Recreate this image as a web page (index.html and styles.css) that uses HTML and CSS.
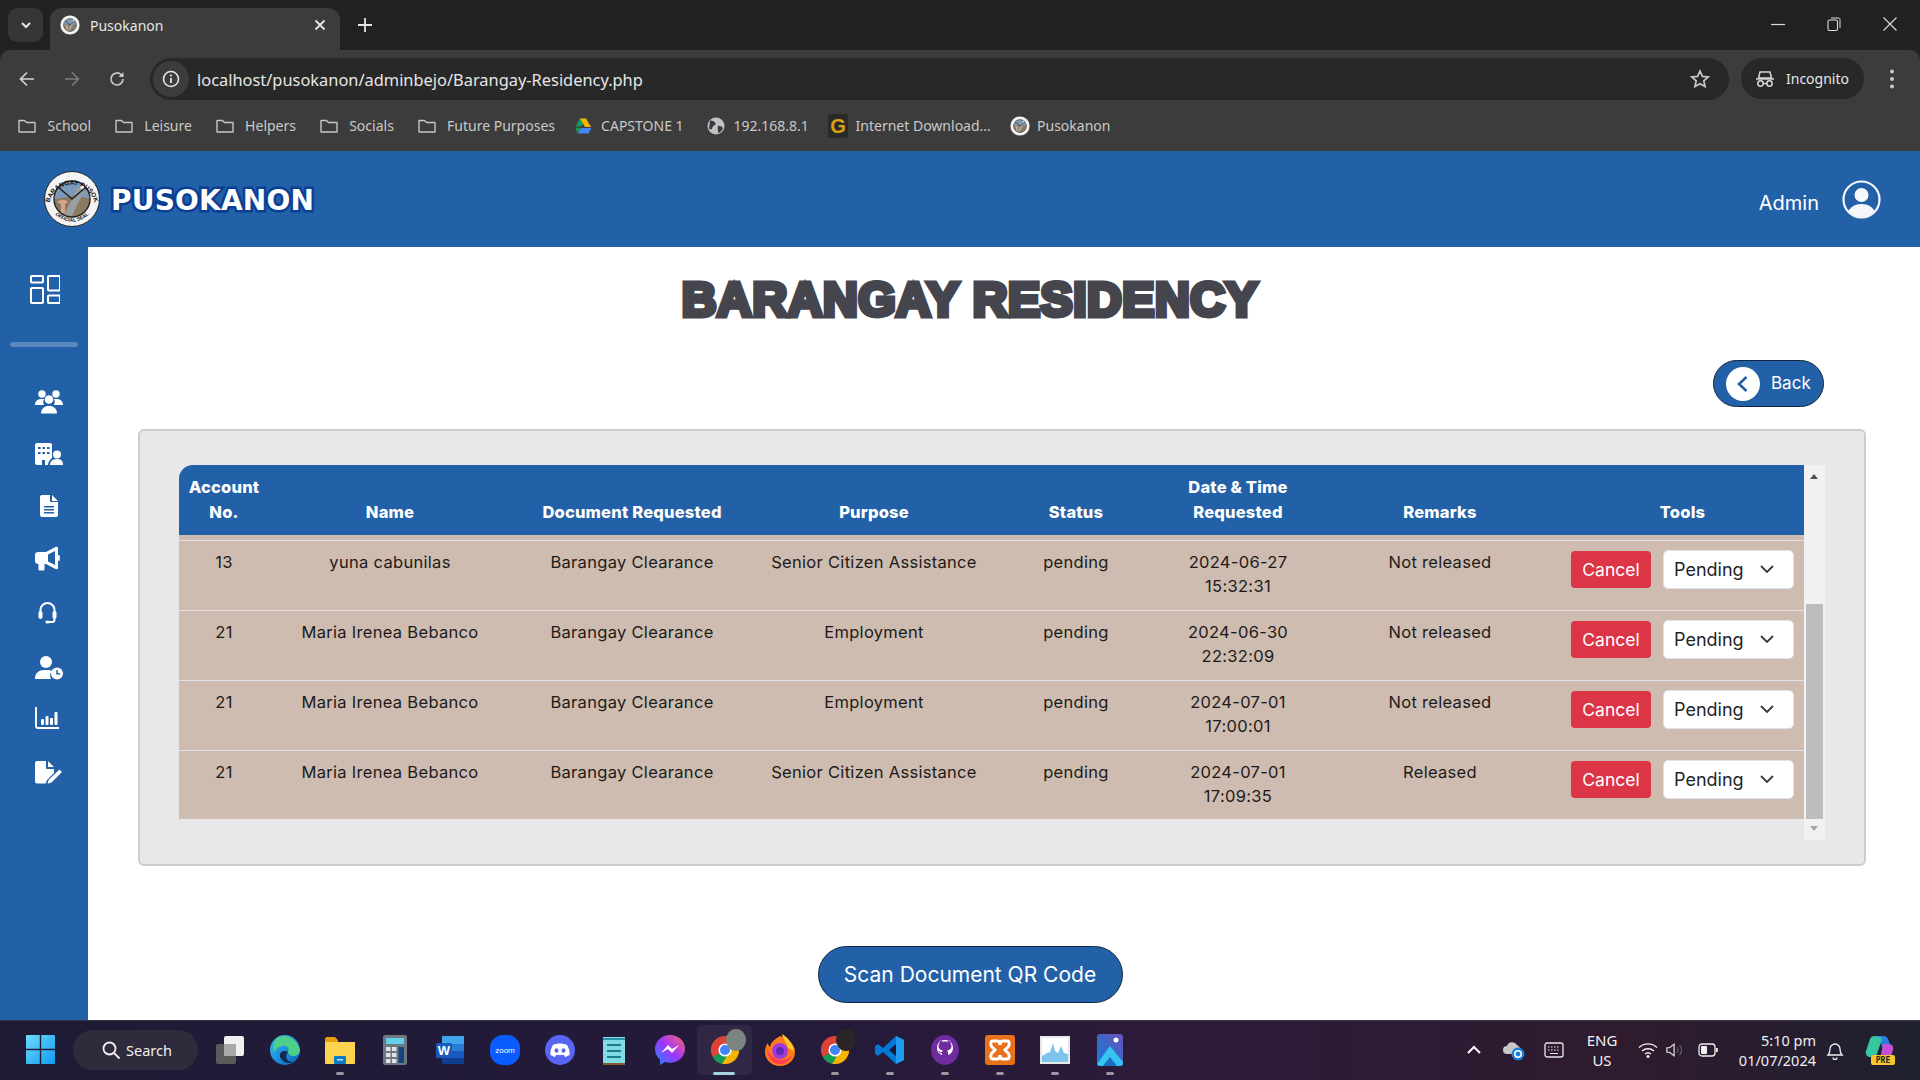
FILE: index.html
```html
<!DOCTYPE html>
<html lang="en">

<head>
    <meta charset="UTF-8">
    <title>Pusokanon</title>
    <link rel="stylesheet" href="styles.css">
</head>

<body>
    <!-- shared shapes -->
    <svg class="defs" width="0" height="0">
        <symbol id="seal" viewBox="0 0 56 56">
            <circle cx="28" cy="28" r="27.5" fill="#f4f4f4" stroke="#222" />
            <circle cx="28" cy="28" r="18" fill="#7d9bb8" />
            <path d="M10 28a18 18 0 0 0 36 0l-14-4-8 2z" fill="#8a7a62" />
            <path d="M20 44l14-28 6 4-12 25z" fill="#9aa0a0" />
            <path d="M13 31c4-3 8-3 11 0l-3 2v9h-4v-9z" fill="#d9a58a" />
            <path d="M14 16l14 12 14-12" fill="none" stroke="#222" stroke-width="1.6" />
            <circle cx="28" cy="28" r="18" fill="none" stroke="#222" stroke-width="1.4" />
            <circle cx="38" cy="16" r="2" fill="#f4f4f4" />
        </symbol>
        <symbol id="folder" viewBox="0 0 20 20">
            <path d="M2 4.500h5.500l2 2H18v9.500H2z" fill="none" stroke="#c7c7c7" stroke-width="1.4" stroke-linejoin="round" />
        </symbol>
        <symbol id="chrome" viewBox="0 0 32 32">
            <circle cx="16" cy="16" r="15" fill="#db4437" />
            <path d="M16 16L3 23.500A15 15 0 0 0 16 31l7-15z" fill="#0f9d58" />
            <path d="M16 16h15A15 15 0 0 1 16 31l-3 0 8-14z" fill="#f4b400" />
            <circle cx="16" cy="16" r="7" fill="#fff" />
            <circle cx="16" cy="16" r="5.400" fill="#4285f4" />
        </symbol>
    </svg>

    <!-- browser window bars -->
    <header class="browser">
        <div class="tab-strip">
            <div class="tab-search">
                <svg width="14" height="14" viewBox="0 0 14 14"><path d="M3 5l4 4 4-4" fill="none" stroke="#e6e6e6" stroke-width="2" /></svg>
            </div>
            <div class="tab">
                <svg class="tab-icon" width="20" height="20"><use href="#seal" /></svg>
                <span class="tab-title">Pusokanon</span>
                <svg width="12" height="12" viewBox="0 0 12 12"><path d="M1.500 1.500l9 9m0-9l-9 9" stroke="#e6e6e6" stroke-width="1.800" /></svg>
            </div>
            <svg class="tab-new" width="14" height="14" viewBox="0 0 14 14"><path d="M7 0v14M0 7h14" stroke="#e6e6e6" stroke-width="1.800" /></svg>
            <div class="window-controls">
                <svg width="14" height="14" viewBox="0 0 14 14"><path d="M0 7.500h14" stroke="#dcdcdc" stroke-width="1.200" /></svg>
                <svg width="14" height="14" viewBox="0 0 14 14"><rect x="1" y="3" width="9.500" height="10.500" rx="1.500" fill="none" stroke="#dcdcdc" stroke-width="1.100" /><path d="M4 1h7.500a1.500 1.500 0 0 1 1.500 1.500V11" fill="none" stroke="#dcdcdc" /></svg>
                <svg width="14" height="14" viewBox="0 0 14 14"><path d="M.5.5l13 13m0-13l-13 13" stroke="#dcdcdc" stroke-width="1.100" /></svg>
            </div>
        </div>

        <div class="toolbar">
            <svg class="nav-icon" width="18" height="18" viewBox="0 0 18 18"><path d="M16 9H3m6-6.500L2.500 9 9 15.500" fill="none" stroke="#d2d2d2" stroke-width="1.700" /></svg>
            <svg class="nav-icon" width="18" height="18" viewBox="0 0 18 18"><path d="M2 9h13M9 2.500L15.500 9 9 15.500" fill="none" stroke="#7d7d7d" stroke-width="1.700" /></svg>
            <svg class="nav-icon" width="18" height="18" viewBox="0 0 18 18"><path d="M15 9a6 6 0 1 1-1.800-4.300L15 6.500" fill="none" stroke="#c9c9c9" stroke-width="1.700" /><path d="M15.500 2v5h-5z" fill="#c9c9c9" /></svg>
            <div class="address">
                <div class="site-info">
                    <svg width="18" height="18" viewBox="0 0 18 18"><circle cx="9" cy="9" r="7.500" fill="none" stroke="#e6e6e6" stroke-width="1.600" /><path d="M9 8v5" stroke="#e6e6e6" stroke-width="1.800" /><circle cx="9" cy="5.500" r="1.100" fill="#e6e6e6" /></svg>
                </div>
                <span class="url">localhost/pusokanon/adminbejo/Barangay-Residency.php</span>
                <svg class="star" width="20" height="20" viewBox="0 0 20 20"><path d="M10 2l2.400 5.400 5.800.6-4.400 3.900 1.300 5.700L10 14.700l-5.100 2.900 1.300-5.700L1.800 8l5.800-.6z" fill="none" stroke="#c7c7c7" stroke-width="1.700" /></svg>
            </div>
            <div class="incognito">
                <svg width="20" height="20" viewBox="0 0 20 20"><path d="M5 3h10l1.500 6h-13zM1 10h18" fill="none" stroke="#d6d6d6" stroke-width="1.500" /><circle cx="5.500" cy="14.500" r="2.700" fill="none" stroke="#d6d6d6" stroke-width="1.500" /><circle cx="14.500" cy="14.500" r="2.700" fill="none" stroke="#d6d6d6" stroke-width="1.500" /><path d="M8 14.500h4" stroke="#d6d6d6" stroke-width="1.500" /></svg>
                <span>Incognito</span>
            </div>
            <svg class="menu-dots" width="6" height="22" viewBox="0 0 6 22"><circle cx="3" cy="3.500" r="2" fill="#c9c9c9" /><circle cx="3" cy="11" r="2" fill="#c9c9c9" /><circle cx="3" cy="18.500" r="2" fill="#c9c9c9" /></svg>
        </div>

        <nav class="bookmarks">
            <a class="bookmark"><svg width="20" height="20"><use href="#folder" /></svg>School</a>
            <a class="bookmark"><svg width="20" height="20"><use href="#folder" /></svg>Leisure</a>
            <a class="bookmark"><svg width="20" height="20"><use href="#folder" /></svg>Helpers</a>
            <a class="bookmark"><svg width="20" height="20"><use href="#folder" /></svg>Socials</a>
            <a class="bookmark"><svg width="20" height="20"><use href="#folder" /></svg>Future Purposes</a>
            <a class="bookmark bm-drive">
                <svg width="18" height="18" viewBox="0 0 18 18"><path d="M6 1.500h6L7.500 9.500h-6z" fill="#0f9d58" /><path d="M12 1.500l5 8.500h-6L6 1.500z" fill="#f4b400" /><path d="M4 16.500l3-5.500h10.500l-3 5.500z" fill="#4285f4" /><path d="M1 10.500l3 6 3-5.500z" fill="#0f9d58" /></svg>
                CAPSTONE 1
            </a>
            <a class="bookmark bm-site">
                <svg width="18" height="18" viewBox="0 0 18 18"><circle cx="9" cy="9" r="8.500" fill="#bfc3c7" /><path d="M3 3.500c3 0 5 1 5.500 3s-3 2-3 4-2 2-3.500 1.500M11 9c2-1 4 .5 5 2-1 3-3 4.500-5 5 .5-2-1-5 0-7z" fill="#3c3c3c" /></svg>
                192.168.8.1
            </a>
            <a class="bookmark bm-idm">
                <svg width="20" height="24" viewBox="0 0 20 24"><rect width="20" height="24" rx="2" fill="#2a2a2a" /><text x="10" y="19" class="idm-letter">G</text></svg>
                Internet Download...
            </a>
            <a class="bookmark bm-home"><svg width="20" height="20"><use href="#seal" /></svg>Pusokanon</a>
        </nav>
    </header>

    <!-- site header -->
    <div class="site-header">
        <div class="brand">
            <svg class="brand-seal" width="56" height="56" viewBox="0 0 56 56">
                <use href="#seal" width="56" height="56" />
                <path id="sealTop" d="M5.500 32A23 23 0 0 1 50.500 32" fill="none" />
                <path id="sealBottom" d="M9 41A23.500 23.500 0 0 0 47 41" fill="none" />
                <text class="seal-top"><textPath href="#sealTop" startOffset="50%" text-anchor="middle">BARANGAY PUSOK</textPath></text>
                <text class="seal-bottom"><textPath href="#sealBottom" startOffset="50%" text-anchor="middle">OFFICIAL SEAL</textPath></text>
            </svg>
            <span class="brand-name">PUSOKANON</span>
        </div>
        <div class="user">
            <span class="user-name">Admin</span>
            <svg width="39" height="39" viewBox="0 0 39 39">
                <defs><clipPath id="avatarClip"><circle cx="19.500" cy="19.500" r="17.500" /></clipPath></defs>
                <g clip-path="url(#avatarClip)" fill="#f5f7fa"><circle cx="19.500" cy="15" r="7" /><ellipse cx="19.500" cy="35" rx="14" ry="11" /></g>
                <circle cx="19.500" cy="19.500" r="18" fill="none" stroke="#f5f7fa" stroke-width="2.200" />
            </svg>
        </div>
    </div>

    <div class="page">
        <aside class="sidebar">
            <svg class="dash-icon" width="30" height="30" viewBox="0 0 30 30">
                <g fill="none" stroke="#fff" stroke-width="2">
                    <rect x="1" y="2" width="12" height="6.500" rx=".8" />
                    <rect x="18" y="2" width="12" height="14.500" rx=".8" />
                    <rect x="1" y="14" width="12" height="15" rx=".8" />
                    <rect x="18" y="21.500" width="12" height="7.500" rx=".8" />
                </g>
            </svg>
            <div class="side-divider"></div>
            <ul class="side-list">
                <li>
                    <svg width="28" height="28" viewBox="0 0 28 28">
                        <g fill="#fff"><circle cx="7" cy="6" r="3.700" /><circle cx="21" cy="6" r="3.700" /><path d="M0 17c0-4 3-6 6-6h3c-1 1.500-1 4 0 6zM28 17c0-4-3-6-6-6h-3c1 1.500 1 4 0 6z" /><circle cx="14" cy="11.500" r="4.300" /><path d="M6 25.500c0-5 3.500-7.500 8-7.500s8 2.500 8 7.500z" /></g>
                    </svg>
                </li>
                <li>
                    <svg width="28" height="28" viewBox="0 1 28 28">
                        <path d="M0 5a2 2 0 0 1 2-2h13a2 2 0 0 1 2 2v13c-2 1.500-4 4-4 7h-3v-5H7v5H2a2 2 0 0 1-2-2z" fill="#fff" />
                        <path d="M3 7h2.500v2H3zm4.500 0H10v2H7.500zM12 7h2.500v2H12zM3 12h2.500v2H3zm4.500 0H10v2H7.500zM12 12h2.500v2H12z" fill="#2261a8" />
                        <circle cx="22" cy="14.500" r="4" fill="#fff" />
                        <path d="M15 25c0-4 3-6 7-6s6 2 6 6z" fill="#fff" />
                    </svg>
                </li>
                <li>
                    <svg width="28" height="28" viewBox="0 2 28 28">
                        <path d="M7 3h8v6a1 1 0 0 0 1 1h7v13a2 2 0 0 1-2 2H7a2 2 0 0 1-2-2V5a2 2 0 0 1 2-2zM17 3l6 6h-6z" fill="#fff" />
                        <path d="M9 14h10v1.600H9zm0 3h10v1.600H9zm0 3h10v1.600H9z" fill="#2261a8" />
                    </svg>
                </li>
                <li>
                    <svg width="28" height="28" viewBox="0 2 28 28">
                        <path d="M20.500 3c1-.8 2.500-.2 2.500 1v20c0 1.200-1.500 1.800-2.500 1L11 20H9.500v5.500a1 1 0 0 1-1 1H4.500a1 1 0 0 1-1-1V20A3 3 0 0 1 0 17v-6a3 3 0 0 1 3-3h8z" fill="#fff" />
                        <path d="M20 7l-7 3.500v7l7 3.500z" fill="#2261a8" />
                        <rect x="23" y="11" width="1.800" height="6" rx=".9" fill="#fff" />
                    </svg>
                </li>
                <li>
                    <svg width="28" height="28" viewBox="0 1 28 28">
                        <path d="M5.500 15v-3a7 7 0 0 1 14 0v3M19.500 20v1.500a2.500 2.500 0 0 1-2.500 2.500h-4" fill="none" stroke="#fff" stroke-width="2" />
                        <rect x="3.500" y="13" width="4" height="8" rx="2" fill="#fff" />
                        <rect x="17.500" y="13" width="4" height="8" rx="2" fill="#fff" />
                        <ellipse cx="12.500" cy="24" rx="2.200" ry="1.600" fill="#fff" />
                    </svg>
                </li>
                <li>
                    <svg width="28" height="28" viewBox="0 -2 28 28">
                        <circle cx="11" cy="8" r="6" fill="#fff" />
                        <path d="M0 25c0-6 4-9 9-9h4c1.500 0 3 .5 4 1-2 2-2.500 5.500-1 8z" fill="#fff" />
                        <circle cx="22" cy="19.500" r="6" fill="#fff" />
                        <path d="M22 16v3.800h3" fill="none" stroke="#2261a8" stroke-width="1.500" />
                    </svg>
                </li>
                <li>
                    <svg width="28" height="28" viewBox="0 0 28 28">
                        <path d="M1 3v19a2 2 0 0 0 2 2h21" fill="none" stroke="#fff" stroke-width="1.900" />
                        <g fill="#fff"><rect x="6" y="15" width="3" height="6" rx="1" /><rect x="10.500" y="12" width="3" height="9" rx="1" /><rect x="15" y="14" width="3" height="7" rx="1" /><rect x="19.500" y="8" width="3" height="13" rx="1" /></g>
                    </svg>
                </li>
                <li>
                    <svg width="28" height="28" viewBox="0 -1 28 28">
                        <path d="M2 3h9v7a1 1 0 0 0 1 1h7v4l-7 7-1.500 3.500H2a2 2 0 0 1-2-2V5a2 2 0 0 1 2-2zM13 3l6 6h-6z" fill="#fff" />
                        <path d="M24.500 11.500l2.500 2.500-10.500 10.500-4 1.200 1.200-4z" fill="#fff" />
                    </svg>
                </li>
            </ul>
        </aside>

        <main class="content">
            <h1 class="page-title">BARANGAY RESIDENCY</h1>

            <div class="back-row">
                <button class="back-btn">
                    <span class="back-circle">
                        <svg width="18" height="20" viewBox="0 0 18 20"><path d="M12.500 3l-7.500 7 7.500 7" fill="none" stroke="#2261a8" stroke-width="2.600" /></svg>
                    </span>
                    Back
                </button>
            </div>

            <section class="panel">
                <div class="table-wrap">
                    <table class="req-table">
                        <colgroup>
                            <col class="col-acc"><col class="col-wide"><col class="col-wide"><col class="col-wide">
                            <col class="col-mid"><col class="col-mid"><col class="col-wide"><col class="col-tools">
                        </colgroup>
                        <thead>
                            <tr>
                                <th>Account<br>No.</th>
                                <th>Name</th>
                                <th>Document Requested</th>
                                <th>Purpose</th>
                                <th>Status</th>
                                <th>Date &amp; Time<br>Requested</th>
                                <th>Remarks</th>
                                <th>Tools</th>
                            </tr>
                        </thead>
                        <tbody>
                            <tr>
                                <td>13</td>
                                <td>yuna cabunilas</td>
                                <td>Barangay Clearance</td>
                                <td>Senior Citizen Assistance</td>
                                <td>pending</td>
                                <td>2024-06-27<br>15:32:31</td>
                                <td>Not released</td>
                                <td>
                                    <div class="tools">
                                        <button class="cancel-btn">Cancel</button>
                                        <div class="status-select">
                                            <select><option>Pending</option></select>
                                            <svg width="14" height="8" viewBox="0 0 14 8"><path d="M1 1l6 6 6-6" fill="none" stroke="#343a40" stroke-width="1.800" /></svg>
                                        </div>
                                    </div>
                                </td>
                            </tr>
                            <tr>
                                <td>21</td>
                                <td>Maria Irenea Bebanco</td>
                                <td>Barangay Clearance</td>
                                <td>Employment</td>
                                <td>pending</td>
                                <td>2024-06-30<br>22:32:09</td>
                                <td>Not released</td>
                                <td>
                                    <div class="tools">
                                        <button class="cancel-btn">Cancel</button>
                                        <div class="status-select">
                                            <select><option>Pending</option></select>
                                            <svg width="14" height="8" viewBox="0 0 14 8"><path d="M1 1l6 6 6-6" fill="none" stroke="#343a40" stroke-width="1.800" /></svg>
                                        </div>
                                    </div>
                                </td>
                            </tr>
                            <tr>
                                <td>21</td>
                                <td>Maria Irenea Bebanco</td>
                                <td>Barangay Clearance</td>
                                <td>Employment</td>
                                <td>pending</td>
                                <td>2024-07-01<br>17:00:01</td>
                                <td>Not released</td>
                                <td>
                                    <div class="tools">
                                        <button class="cancel-btn">Cancel</button>
                                        <div class="status-select">
                                            <select><option>Pending</option></select>
                                            <svg width="14" height="8" viewBox="0 0 14 8"><path d="M1 1l6 6 6-6" fill="none" stroke="#343a40" stroke-width="1.800" /></svg>
                                        </div>
                                    </div>
                                </td>
                            </tr>
                            <tr class="last-row">
                                <td>21</td>
                                <td>Maria Irenea Bebanco</td>
                                <td>Barangay Clearance</td>
                                <td>Senior Citizen Assistance</td>
                                <td>pending</td>
                                <td>2024-07-01<br>17:09:35</td>
                                <td>Released</td>
                                <td>
                                    <div class="tools">
                                        <button class="cancel-btn">Cancel</button>
                                        <div class="status-select">
                                            <select><option>Pending</option></select>
                                            <svg width="14" height="8" viewBox="0 0 14 8"><path d="M1 1l6 6 6-6" fill="none" stroke="#343a40" stroke-width="1.800" /></svg>
                                        </div>
                                    </div>
                                </td>
                            </tr>
                        </tbody>
                    </table>
                    <div class="scrollbar">
                        <span class="arrow-up"></span>
                        <div class="scroll-thumb"></div>
                        <span class="arrow-down"></span>
                    </div>
                </div>
            </section>

            <div class="scan-row">
                <button class="scan-btn">Scan Document QR Code</button>
            </div>
        </main>
    </div>

    <!-- windows taskbar -->
    <footer class="taskbar">
        <svg class="start" width="29" height="29" viewBox="0 0 29 29">
            <defs><linearGradient id="winGrad" x1="0" y1="0" x2="1" y2="1"><stop offset="0" stop-color="#6fdcfb" /><stop offset="1" stop-color="#0f9bf0" /></linearGradient></defs>
            <path d="M0 1a1 1 0 0 1 1-1h12.800v13.800H0zM15.200 0H28a1 1 0 0 1 1 1v12.800H15.200zM0 15.200h13.800V29H1a1 1 0 0 1-1-1zM15.200 15.200H29V28a1 1 0 0 1-1 1H15.200z" fill="url(#winGrad)" />
        </svg>
        <div class="search-pill">
            <svg width="20" height="20" viewBox="0 0 20 20"><circle cx="8.500" cy="8.500" r="6" fill="none" stroke="#f0f0f0" stroke-width="1.800" /><path d="M13 13l5.500 5.500" stroke="#f0f0f0" stroke-width="1.800" /></svg>
            <span>Search</span>
        </div>

        <div class="task-icons">
            <div class="task-icon">
                <svg width="30" height="30" viewBox="0 0 30 30"><rect x="1" y="9" width="20" height="20" rx="2" fill="#5a5a5a" /><rect x="9" y="1" width="20" height="20" rx="2" fill="#f0f0f0" /><rect x="9" y="9" width="12" height="12" fill="#a8a8a8" /></svg>
            </div>
            <div class="task-icon">
                <svg width="32" height="32" viewBox="0 0 32 32">
                    <defs><linearGradient id="edgeGrad" x1="0" y1="0" x2="1" y2="1"><stop offset="0" stop-color="#35c1f1" /><stop offset="1" stop-color="#0b5fbf" /></linearGradient></defs>
                    <circle cx="16" cy="16" r="15" fill="url(#edgeGrad)" />
                    <path d="M8 4c8-5 20 0 23 12 0 4-3 6-7 6-3 0-5-2-5-4 2-4-2-7-6-6-5 1-7 4-8 7C4 13 4 8 8 4z" fill="#4fd08a" />
                    <path d="M19 18c-3-2-7-1-8 2-1 4 3 9 10 9 1 0 2 0 3-1-6 0-9-5-5-10z" fill="#142a52" />
                </svg>
            </div>
            <div class="task-icon running">
                <svg width="30" height="30" viewBox="0 0 30 30"><path d="M0 4a2 2 0 0 1 2-2h8l3 3v5H0z" fill="#e3a008" /><path d="M0 7h30v21a1 1 0 0 1-1 1H1a1 1 0 0 1-1-1z" fill="#fcd34d" /><rect x="9" y="21" width="12" height="8" rx="1" fill="#0b7cc9" /><rect x="12" y="24" width="6" height="1.500" fill="#bde0f5" /></svg>
            </div>
            <div class="task-icon">
                <svg width="24" height="30" viewBox="0 0 24 30"><rect width="24" height="30" rx="2" fill="#6d7780" /><rect x="3" y="3" width="18" height="6" fill="#5fd2ea" /><path d="M3 12h4.500v4H3zm6 0h4.500v4H9zM3 18h4.500v4H3zm6 0h4.500v4H9zM3 24h4.500v4H3zm6 0h4.500v4H9z" fill="#dfe3e6" /><rect x="15.500" y="12" width="5.500" height="16" fill="#14457f" /></svg>
            </div>
            <div class="task-icon">
                <svg width="30" height="30" viewBox="0 0 30 30"><path d="M8 1h20a1 1 0 0 1 1 1v7H7V2a1 1 0 0 1 1-1z" fill="#41a5ee" /><rect x="7" y="9" width="22" height="7" fill="#2b7cd3" /><rect x="7" y="16" width="22" height="7" fill="#185abd" /><path d="M7 23h22v5a1 1 0 0 1-1 1H8a1 1 0 0 1-1-1z" fill="#103f91" /><rect x="1" y="8" width="16" height="15" rx="1.500" fill="#185abd" /><text x="9" y="20" class="word-letter">W</text></svg>
            </div>
            <div class="task-icon">
                <svg width="30" height="30" viewBox="0 0 30 30"><rect width="30" height="30" rx="13" fill="#0b5cff" /><text x="15" y="18" class="zoom-word">zoom</text></svg>
            </div>
            <div class="task-icon">
                <svg width="30" height="30" viewBox="0 0 30 30"><circle cx="15" cy="15" r="15" fill="#5865f2" /><path d="M8 10c4-2 10-2 14 0 2 3 3 7 2.500 10-1.500 1-3 1.700-4.500 2l-1-2h-8l-1 2c-1.500-.3-3-1-4.500-2C5 17 6 13 8 10z" fill="#fff" /><ellipse cx="11.500" cy="15.500" rx="2" ry="2.300" fill="#5865f2" /><ellipse cx="18.500" cy="15.500" rx="2" ry="2.300" fill="#5865f2" /></svg>
            </div>
            <div class="task-icon">
                <svg width="24" height="30" viewBox="0 0 24 30"><rect y="2" width="22" height="28" fill="#7fdbe4" /><rect y="28" width="22" height="2" fill="#8a5a2b" /><path d="M0 3h22v2H0z" fill="#2a93a8" /><path d="M4 9h14v2H4zm0 6h14v2H4zm0 6h14v2H4z" fill="#1a7f93" /></svg>
            </div>
            <div class="task-icon">
                <svg width="30" height="32" viewBox="0 0 30 32">
                    <defs><linearGradient id="msgGrad" x1="0" y1="1" x2="1" y2="0"><stop offset="0" stop-color="#1f8cff" /><stop offset=".5" stop-color="#a033ff" /><stop offset="1" stop-color="#ff6968" /></linearGradient></defs>
                    <path d="M15 1C7 1 0 7 0 15c0 4.500 2 8 5 10.500V31l5-3c1.500.5 3 .7 5 .7 8 0 15-6 15-14S23 1 15 1z" fill="url(#msgGrad)" />
                    <path d="M6 19l7-8 4 4 7-4-7 8-4-4z" fill="#fff" />
                </svg>
            </div>
            <div class="task-icon active">
                <svg width="30" height="30"><use href="#chrome" /></svg>
                <span class="profile-badge badge-grey"></span>
            </div>
            <div class="task-icon">
                <svg width="30" height="32" viewBox="0 0 30 32">
                    <path d="M15 2c8 2 15 8 15 16a15 14 0 0 1-30 0c0-4 1-7 3-9 0 2 1 3 2 4 1-5 5-8 10-11z" fill="#ff7a1a" />
                    <path d="M17 0c5 3 11 9 12 17l-6-3c-1-5-5-8-6-14z" fill="#ffc62e" />
                    <circle cx="15" cy="17" r="8" fill="#a13ad8" />
                    <circle cx="15" cy="17" r="4" fill="#5b2bb5" />
                    <path d="M2 14c2 6 7 12 15 12 4 0 8-2 10-5-2 6-7 9-12 9C8 30 2 24 2 14z" fill="#ff3e55" />
                </svg>
            </div>
            <div class="task-icon running">
                <svg width="30" height="30"><use href="#chrome" /></svg>
                <span class="profile-badge badge-dark"></span>
            </div>
            <div class="task-icon running">
                <svg width="30" height="30" viewBox="0 0 30 30"><path d="M21 1l8 4v20l-8 4L8 17l-5 4-3-2v-8l3-2 5 4z" fill="#0078d4" /><path d="M21 1l8 4v20l-8 4z" fill="#1f9cf0" /><path d="M21 9l-7 6 7 6z" fill="#1a1630" /></svg>
            </div>
            <div class="task-icon running">
                <svg width="28" height="30" viewBox="0 0 28 30"><ellipse cx="14" cy="15" rx="14" ry="15" fill="#6e2c9f" /><path d="M14 5c-5 0-8 3.500-8 8 0 3.500 2 6 5 7v-2c-2 .5-3-.5-3.500-2 1 .2 2 1.500 3.500 1 .2-.8.500-1.200 1-1.500-3-.5-4.500-2-4.500-4.500 0-1 .3-2 1-2.700 0-1 0-2 .4-2.800 1 0 2 .5 3 1.300a9 9 0 0 1 4.200 0c1-.8 2-1.300 3-1.300.4.800.4 1.800.4 2.800.7.700 1 1.700 1 2.700 0 2.500-1.500 4-4.500 4.500.7.500 1 1.200 1 2.300V20c3-1 5-3.500 5-7 0-4.500-3-8-8-8z" fill="#fff" /></svg>
            </div>
            <div class="task-icon running">
                <svg width="30" height="30" viewBox="0 0 30 30"><rect width="30" height="30" rx="3" fill="#e8711a" /><path d="M8 6h4c2 0 3 2 3 4 0-2 1-4 3-4h4c3 0 3 5 0 7l-2 2 2 2c3 2 3 7 0 7h-4c-2 0-3-2-3-4 0 2-1 4-3 4H8c-3 0-3-5 0-7l2-2-2-2C5 11 5 6 8 6z" fill="none" stroke="#fff" stroke-width="3" /></svg>
            </div>
            <div class="task-icon running">
                <svg width="30" height="28" viewBox="0 0 30 28"><rect width="30" height="28" fill="#e8e8e8" /><rect x="2" y="2" width="26" height="24" fill="#fff" /><path d="M2 20l5-3 3-1 3-9 2 8 3 2 3-7 3 7 4 1v8H2z" fill="#7fc4ec" /></svg>
            </div>
            <div class="task-icon running">
                <svg width="26" height="32" viewBox="0 0 26 32">
                    <defs><linearGradient id="photoGrad" x1="0" y1="1" x2="1" y2="0"><stop offset="0" stop-color="#0f7fd6" /><stop offset="1" stop-color="#6b4fbb" /></linearGradient></defs>
                    <rect width="26" height="32" rx="3" fill="url(#photoGrad)" />
                    <path d="M0 30l13-18 13 16v1a3 3 0 0 1-3 3H3a3 3 0 0 1-3-2z" fill="#35c3ef" />
                    <path d="M6 32l7-9 7 9z" fill="#1a6fc2" />
                    <circle cx="19" cy="6" r="2.500" fill="#fff" />
                </svg>
            </div>
        </div>

        <div class="tray">
            <div class="tray-cell cell-40">
                <svg width="16" height="10" viewBox="0 0 16 10"><path d="M2 8l6-6 6 6" fill="none" stroke="#fff" stroke-width="2" /></svg>
            </div>
            <div class="tray-cell cell-40">
                <svg width="22" height="22" viewBox="0 0 22 22"><path d="M4 15a4 4 0 0 1 0-8 5.500 5.500 0 0 1 10-1 4.500 4.500 0 0 1 3 4v5z" fill="#c8c8c8" /><circle cx="15" cy="15" r="6.500" fill="#1c7fe0" /><circle cx="15" cy="15" r="3.200" fill="none" stroke="#fff" stroke-width="1.500" /></svg>
            </div>
            <div class="tray-cell cell-40">
                <svg width="20" height="16" viewBox="0 0 20 16"><rect x="1" y="1" width="18" height="14" rx="2" fill="none" stroke="#e8e8e8" stroke-width="1.300" /><path d="M4 5h1.500M7 5h1.500M10 5h1.500M13 5h1.500M4 8h1.500M7 8h1.500M10 8h1.500M13 8h1.500M6 11.500h8" stroke="#e8e8e8" stroke-width="1.200" /></svg>
            </div>
            <div class="tray-cell cell-lang"><span>ENG</span><span>US</span></div>
            <div class="tray-cell cell-wifi">
                <svg width="20" height="18" viewBox="0 0 20 18"><path d="M1 6.500a13 13 0 0 1 18 0M4 10a9 9 0 0 1 12 0M7 13a4.500 4.500 0 0 1 6 0" fill="none" stroke="#f0f0f0" stroke-width="1.400" /><circle cx="10" cy="15.500" r="1.500" fill="#f0f0f0" /></svg>
            </div>
            <div class="tray-cell cell-vol">
                <svg width="20" height="18" viewBox="0 0 20 18"><path d="M1 6.500h3l5-4v13l-5-4H1z" fill="none" stroke="#e8e8e8" stroke-width="1.300" /><path d="M12 6a4 4 0 0 1 0 6M15 3.500a8 8 0 0 1 0 11" fill="none" stroke="#6a6470" stroke-width="1.200" /></svg>
            </div>
            <div class="tray-cell cell-batt">
                <svg width="20" height="14" viewBox="0 0 20 14"><rect x="1" y="1" width="16" height="12" rx="3" fill="none" stroke="#f0f0f0" stroke-width="1.300" /><rect x="3" y="3" width="6" height="8" rx="1" fill="#f0f0f0" /><rect x="18" y="5" width="1.800" height="4" fill="#f0f0f0" /></svg>
            </div>
            <div class="tray-cell cell-clock"><span>5:10 pm</span><span>01/07/2024</span></div>
            <div class="tray-cell cell-bell">
                <svg width="18" height="20" viewBox="0 0 18 20"><path d="M2 15c1.500-1.500 2-3 2-6a5 5 0 0 1 10 0c0 3 .5 4.500 2 6zM7 17.500a2 2 0 0 0 4 0" fill="none" stroke="#f0f0f0" stroke-width="1.300" /></svg>
            </div>
            <div class="tray-cell cell-copilot">
                <svg width="30" height="30" viewBox="0 0 30 30">
                    <path d="M10 1h9c2 0 3 1 4 3l3 8h-9L14 4c-.500-1-2-1-4-3z" fill="#2b7fe0" />
                    <path d="M9 1c-2 0-3 1-4 3L1 16c-1 3 1 6 4 6h6l6-18c-1-2-4-3-8-3z" fill="#37c7a0" />
                    <path d="M18 9h6c3 0 5 3 4 6l-2 6c-1 2-3 3-5 3h-6z" fill="#c24fd6" />
                    <rect x="6" y="20" width="24" height="10" rx="2" fill="#f6c42c" />
                    <text x="18" y="28" class="pre-tag">PRE</text>
                </svg>
            </div>
        </div>
    </footer>
</body>

</html>
```

FILE: styles.css
```css
* {
    box-sizing: border-box;
}

html,
body {
    margin: 0;
    height: 100%;
}

body {
    width: 1920px;
    height: 1080px;
    overflow: hidden;
    display: flex;
    flex-direction: column;
    font-family: 'Inter', 'Liberation Sans', sans-serif;
    background: #fff;
}

.defs {
    position: absolute;
}

/* browser bars */
.browser {
    font-family: 'Noto Sans', 'Open Sans', sans-serif;
    color: #e6e6e6;
    background: #202221;
}

.tab-strip {
    height: 50px;
    display: flex;
    align-items: flex-start;
    padding: 8px 0 0 8px;
}

.tab-search {
    width: 35px;
    height: 34px;
    border-radius: 9px;
    background: #363636;
    display: flex;
    align-items: center;
    justify-content: center;
}

.tab {
    width: 290px;
    height: 42px;
    margin-left: 7px;
    padding: 0 14px 8px 10px;
    border-radius: 12px 12px 0 0;
    background: #3c3c3c;
    display: flex;
    align-items: center;
}

.tab-icon {
    flex: none;
}

.tab-title {
    flex: 1;
    margin-left: 10px;
    font-size: 14px;
}

.tab-new {
    margin: 10px 0 0 18px;
}

.window-controls {
    margin-left: auto;
    width: 149px;
    padding-top: 9px;
    display: flex;
    gap: 42px;
}

.toolbar {
    height: 50px;
    background: #3c3c3c;
    border-radius: 10px 10px 0 0;
    display: flex;
    align-items: flex-start;
    padding: 8px 0 0 18px;
}

.nav-icon {
    margin: 12px 27px 0 0;
}

.address {
    width: 1579px;
    height: 42px;
    margin-left: -3px;
    padding: 0 19px 0 3px;
    border-radius: 21px;
    background: #282828;
    display: flex;
    align-items: center;
}

.site-info {
    width: 36px;
    height: 36px;
    border-radius: 50%;
    background: #3c3c3c;
    display: flex;
    align-items: center;
    justify-content: center;
}

.url {
    flex: 1;
    margin: 1px 0 0 8px;
    font-size: 16.4px;
}

.incognito {
    width: 123px;
    height: 41px;
    margin-left: 12px;
    padding-left: 14px;
    border-radius: 21px;
    background: #282828;
    display: flex;
    align-items: center;
    gap: 11px;
    font-size: 14px;
}

.menu-dots {
    margin: 10px 0 0 25px;
}

.bookmarks {
    height: 51px;
    background: #3c3c3c;
    display: flex;
    align-items: center;
    padding-left: 17px;
    gap: 22.7px;
}

.bookmark {
    display: flex;
    align-items: center;
    gap: 10.5px;
    font-size: 14px;
    color: #c9c9c9;
    white-space: nowrap;
}

.bm-drive,
.bm-site {
    gap: 9px;
}

.bm-drive {
    margin-left: -3.6px;
}

.bm-site {
    margin-left: 0.3px;
}

.bm-idm {
    margin-left: -3.5px;
    gap: 7.5px;
}

.bm-home {
    margin-left: -4px;
    gap: 7.5px;
}

.idm-letter {
    font: bold 20px 'Liberation Sans', sans-serif;
    fill: #d9a214;
    text-anchor: middle;
}

/* site header */
.site-header {
    height: 96px;
    background: #2261a8;
    display: flex;
    align-items: center;
    justify-content: space-between;
    padding: 0 39px 0 44px;
}

.brand {
    display: flex;
    align-items: center;
    gap: 11px;
}

.seal-top {
    font: bold 6.5px 'Liberation Sans', sans-serif;
    fill: #111;
}

.seal-bottom {
    font: bold 5px 'Liberation Sans', sans-serif;
    fill: #111;
}

.brand-name {
    margin-top: 2px;
    font: bold 28px 'DejaVu Sans', sans-serif;
    letter-spacing: 0.2px;
    color: #fff;
    -webkit-text-stroke: 5px #0b3f94;
    paint-order: stroke fill;
}

.user {
    display: flex;
    align-items: center;
    gap: 23px;
    color: #fff;
}

.user svg {
    margin-top: 1px;
}

.user-name {
    margin-top: 7px;
    font-size: 20px;
}

/* page body */
.page {
    flex: 1;
    min-height: 0;
    display: flex;
}

.sidebar {
    width: 88px;
    background: #2261a8;
    padding-top: 27px;
}

.dash-icon {
    display: block;
    margin-left: 30px;
}

.side-divider {
    width: 68px;
    height: 5px;
    margin: 38px 0 0 10px;
    border-radius: 3px;
    background: rgba(255, 255, 255, 0.25);
}

.side-list {
    list-style: none;
    margin: 29px 0 0;
    padding: 0 0 0 35px;
}

.side-list li {
    height: 52.7px;
    display: flex;
    align-items: center;
}

.content {
    flex: 1;
    min-width: 0;
    padding: 0 54px 0 50px;
}

.page-title {
    margin: 0;
    height: 113px;
    padding: 24px 64px 0 0;
    text-align: center;
    font: bold 48px/1.2 'Liberation Sans', sans-serif;
    letter-spacing: 0.6px;
    color: #45454d;
    -webkit-text-stroke: 5px #45454d;
}

.back-row {
    display: flex;
    justify-content: flex-end;
    padding-right: 42px;
}

.back-btn {
    width: 111px;
    height: 47px;
    padding: 0 0 1px 12px;
    border: 1.5px solid #14263f;
    border-radius: 24px;
    background: #2261a8;
    color: #fff;
    font: 17px 'Inter', sans-serif;
    display: flex;
    align-items: center;
    gap: 11px;
}

.back-circle {
    width: 34px;
    height: 34px;
    margin-top: 1px;
    border-radius: 50%;
    background: #fff;
    display: flex;
    align-items: center;
    justify-content: center;
}

.panel {
    height: 437px;
    margin-top: 22px;
    padding: 34px 39px 0;
    border: 2px solid #cdcdcd;
    border-radius: 6px;
    background: #e8e8e8;
}

.table-wrap {
    display: flex;
    align-items: flex-start;
}

.req-table {
    width: 1625px;
    table-layout: fixed;
    border-collapse: separate;
    border-spacing: 0;
    font-size: 16.5px;
    letter-spacing: 0.3px;
    color: #1d1a1a;
}

.col-acc {
    width: 90px;
}

.col-wide {
    width: 242px;
}

.col-mid {
    width: 162px;
}

.col-tools {
    width: 243px;
}

.req-table th {
    height: 75px;
    padding: 0 0 10px;
    border-bottom: 5px solid #cdbcaf;
    background: #2261a8;
    color: #fff;
    font-weight: 800;
    line-height: 25px;
    letter-spacing: 0.2px;
    vertical-align: bottom;
}

.req-table th:first-child {
    border-top-left-radius: 14px;
}

.req-table td {
    height: 70px;
    padding: 9px 4px 0;
    border-top: 1px solid #dee2e6;
    background: #cdbcaf;
    text-align: center;
    vertical-align: top;
    line-height: 24px;
}

.last-row td {
    height: 69px;
}

.tools {
    display: flex;
    align-items: center;
    gap: 12px;
    margin: 0 6px 0 6px;
}

.cancel-btn {
    width: 80px;
    height: 37px;
    padding: 0;
    border: none;
    border-radius: 4px;
    background: #dc3545;
    color: #fff;
    font: 17.5px 'Inter', sans-serif;
}

.status-select {
    position: relative;
    width: 131px;
    height: 39px;
}

.status-select select {
    width: 100%;
    height: 100%;
    padding: 0 0 0 10px;
    border: 1px solid #dee2e6;
    border-radius: 5px;
    background: #fff;
    appearance: none;
    color: #212529;
    font: 18px 'Inter', sans-serif;
}

.status-select svg {
    position: absolute;
    right: 20px;
    top: 15px;
}

/* fake scrollbar, the real one differs per platform */
.scrollbar {
    position: relative;
    width: 21px;
    height: 375px;
    background: #f1f1f1;
}

.scroll-thumb {
    position: absolute;
    left: 2px;
    top: 139px;
    width: 17px;
    height: 215px;
    background: #bdbdbd;
}

.arrow-up,
.arrow-down {
    position: absolute;
    left: 6px;
    width: 0;
    height: 0;
    border-left: 4.5px solid transparent;
    border-right: 4.5px solid transparent;
}

.arrow-up {
    top: 9px;
    border-bottom: 5px solid #505050;
}

.arrow-down {
    bottom: 9px;
    border-top: 5px solid #a3a3a3;
}

.scan-row {
    display: flex;
    justify-content: center;
    padding: 80px 64px 0 0;
}

.scan-btn {
    width: 305px;
    height: 57px;
    border: 1.5px solid #14263f;
    border-radius: 29px;
    background: #2261a8;
    color: #fff;
    font: 21px 'Inter', sans-serif;
}

/* taskbar */
.taskbar {
    height: 60px;
    flex: none;
    border-top: 1px solid #3a3648;
    background: linear-gradient(90deg, #1e1b36 0%, #241a3a 40%, #2c1a3a 60%, #2e1b2e 85%, #1f2030 100%);
    font-family: 'Noto Sans', 'Open Sans', sans-serif;
    color: #f0f0f0;
    display: flex;
    align-items: center;
    padding: 0 0 2px 26px;
}

.start {
    flex: none;
}

.search-pill {
    width: 125px;
    height: 40px;
    margin-left: 18px;
    padding-left: 28px;
    border-radius: 20px;
    background: #2f2b3d;
    display: flex;
    align-items: center;
    gap: 5px;
    font-size: 14.5px;
}

.task-icons {
    margin-left: 4px;
    display: flex;
}

.task-icon {
    position: relative;
    width: 55px;
    height: 50px;
    display: flex;
    align-items: center;
    justify-content: center;
}

.task-icon.running::after,
.task-icon.active::after {
    content: "";
    position: absolute;
    left: 24px;
    bottom: 0;
    width: 8px;
    height: 3px;
    border-radius: 2px;
    background: #9a97a3;
}

.task-icon.active {
    border-radius: 5px;
    background: rgba(255, 255, 255, 0.06);
}

.task-icon.active::after {
    left: 16px;
    width: 22px;
    background: #a5d3e6;
}

.profile-badge {
    position: absolute;
    top: 4px;
    right: 6px;
    width: 20px;
    height: 22px;
    border-radius: 50%;
}

.badge-grey {
    background: #7d8580;
}

.badge-dark {
    background: #2a2628;
}

.word-letter {
    font: bold 13px 'Liberation Sans', sans-serif;
    fill: #fff;
    text-anchor: middle;
}

.zoom-word {
    font: 8px 'Liberation Sans', sans-serif;
    fill: #fff;
    text-anchor: middle;
}

.pre-tag {
    font: bold 8px 'DejaVu Sans Mono', monospace;
    fill: #222;
    text-anchor: middle;
}

.tray {
    margin-left: auto;
    padding-right: 14px;
    display: flex;
    align-items: center;
}

.tray-cell {
    display: flex;
    align-items: center;
    justify-content: center;
}

.cell-40 {
    width: 40px;
}

.cell-lang {
    width: 56px;
    flex-direction: column;
    font-size: 15px;
    line-height: 20px;
}

.cell-wifi {
    width: 36px;
}

.cell-vol {
    width: 18px;
}

.cell-batt {
    width: 48px;
}

.cell-clock {
    width: 84px;
    flex-direction: column;
    align-items: flex-end;
    font-size: 14.5px;
    line-height: 20px;
    white-space: nowrap;
}

.cell-bell {
    width: 38px;
}

.cell-copilot {
    width: 52px;
}
```
